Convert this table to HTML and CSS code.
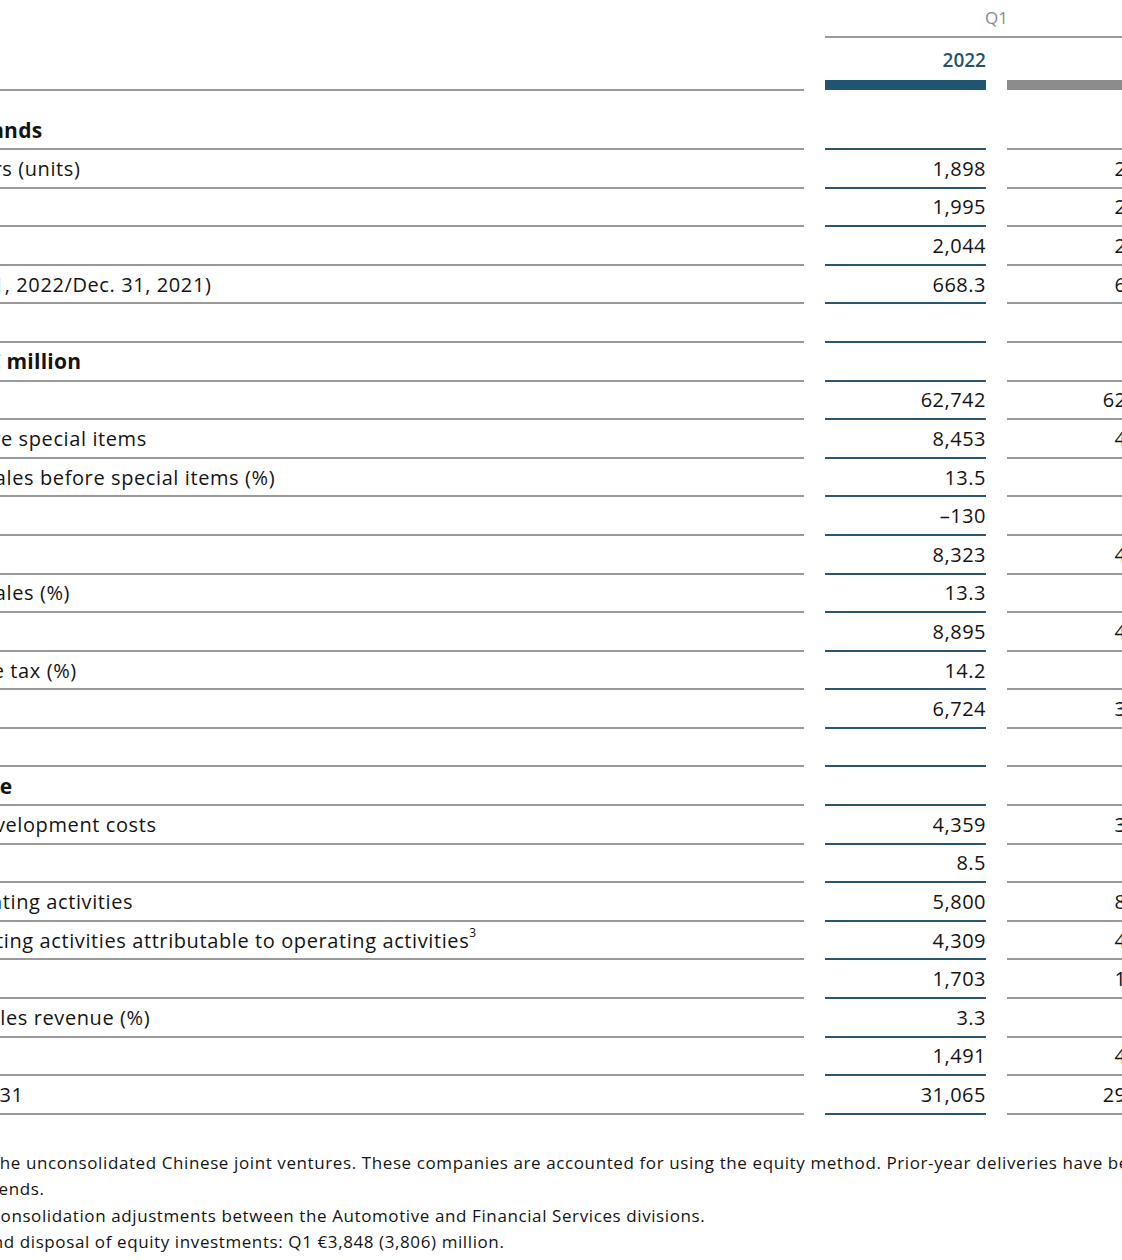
FILE: index.html
```html
<!DOCTYPE html>
<html lang="en">
<head>
<meta charset="utf-8">
<title>Key figures</title>
<link rel="stylesheet" href="styles.css">
</head>
<body>
<div class="page">
  <div class="head head-period">
    <div class="cell-label"></div>
    <div class="period">Q1</div>
  </div>
  <div class="head head-years">
    <div class="cell-label"></div>
    <div class="year cur">2022</div>
    <div class="year prev">2021</div>
  </div>

  <div class="rows">
    <div class="row section"><div class="lbl">Volume data¹ thousands</div><div class="val cur"></div><div class="val prev"></div></div>
    <div class="row"><div class="lbl">Deliveries to customers (units)</div><div class="val cur">1,898</div><div class="val prev">2,462</div></div>
    <div class="row"><div class="lbl">Vehicle sales</div><div class="val cur">1,995</div><div class="val prev">2,528</div></div>
    <div class="row"><div class="lbl">Production</div><div class="val cur">2,044</div><div class="val prev">2,492</div></div>
    <div class="row"><div class="lbl">Employees (on Mar. 31, 2022/Dec. 31, 2021)</div><div class="val cur">668.3</div><div class="val prev">672.8</div></div>
    <div class="row"><div class="lbl"></div><div class="val cur"></div><div class="val prev"></div></div>

    <div class="row section"><div class="lbl">Financial results in € million</div><div class="val cur"></div><div class="val prev"></div></div>
    <div class="row"><div class="lbl">Sales revenue</div><div class="val cur">62,742</div><div class="val prev">62,377</div></div>
    <div class="row"><div class="lbl">Operating result before special items</div><div class="val cur">8,453</div><div class="val prev">4,807</div></div>
    <div class="row"><div class="lbl">Operating return on sales before special items (%)</div><div class="val cur">13.5</div><div class="val prev">7.7</div></div>
    <div class="row"><div class="lbl">Special items</div><div class="val cur">–130</div><div class="val prev">–</div></div>
    <div class="row"><div class="lbl">Operating result</div><div class="val cur">8,323</div><div class="val prev">4,807</div></div>
    <div class="row"><div class="lbl">Operating return on sales (%)</div><div class="val cur">13.3</div><div class="val prev">7.7</div></div>
    <div class="row"><div class="lbl">Earnings before tax</div><div class="val cur">8,895</div><div class="val prev">4,956</div></div>
    <div class="row"><div class="lbl">Return on sales before tax (%)</div><div class="val cur">14.2</div><div class="val prev">7.9</div></div>
    <div class="row"><div class="lbl">Earnings after tax</div><div class="val cur">6,724</div><div class="val prev">3,378</div></div>
    <div class="row"><div class="lbl"></div><div class="val cur"></div><div class="val prev"></div></div>

    <div class="row section"><div class="lbl">Division²: Automotive</div><div class="val cur"></div><div class="val prev"></div></div>
    <div class="row"><div class="lbl">Total research and development costs</div><div class="val cur">4,359</div><div class="val prev">3,724</div></div>
    <div class="row"><div class="lbl">R&amp;D ratio (%)</div><div class="val cur">8.5</div><div class="val prev">7.1</div></div>
    <div class="row"><div class="lbl">Cash flows from operating activities</div><div class="val cur">5,800</div><div class="val prev">8,375</div></div>
    <div class="row"><div class="lbl">Cash flows from investing activities attributable to operating activities<sup>3</sup></div><div class="val cur">4,309</div><div class="val prev">4,058</div></div>
    <div class="row"><div class="lbl">of which: capex</div><div class="val cur">1,703</div><div class="val prev">1,883</div></div>
    <div class="row"><div class="lbl">Capex as a share of sales revenue (%)</div><div class="val cur">3.3</div><div class="val prev">3.6</div></div>
    <div class="row"><div class="lbl">Net cash flow</div><div class="val cur">1,491</div><div class="val prev">4,317</div></div>
    <div class="row"><div class="lbl">Net liquidity at March 31</div><div class="val cur">31,065</div><div class="val prev">29,584</div></div>
  </div>

  <div class="notes">
    <p class="note"><span class="num">1</span>Volume data including the unconsolidated Chinese joint ventures. These companies are accounted for using the equity method. Prior-year deliveries have been updated to<br>reflect new statistical trends.</p>
    <p class="note"><span class="num">2</span>Including allocation of consolidation adjustments between the Automotive and Financial Services divisions.</p>
    <p class="note"><span class="num">3</span>Excluding acquisition and disposal of equity investments: Q1 €3,848 (3,806) million.</p>
  </div>
</div>
</body>
</html>
```

FILE: styles.css
```css
html, body {
  margin: 0;
  padding: 0;
  background: #ffffff;
  overflow: hidden;
}

body {
  font-family: "Open Sans", "Noto Sans", "Liberation Sans", sans-serif;
  color: #141414;
  width: 1122px;
  height: 1260px;
}

.page {
  margin-left: -220px;
  width: 1700px;
}

.head {
  display: grid;
  grid-template-columns: 1024px 161px 161px;
  column-gap: 21px;
}

.head-period {
  height: 38px;
}

.period {
  grid-column: 2 / span 2;
  border-bottom: 2px solid #9a9a9a;
  text-align: center;
  font-size: 17px;
  line-height: 36px;
  color: #8a8a8a;
}

.head-years {
  align-items: start;
}

.head-years .cell-label {
  height: 53px;
  box-sizing: border-box;
  border-bottom: 2px solid #9a9a9a;
}

.year {
  box-sizing: border-box;
  height: 52px;
  padding-top: 10px;
  line-height: 24px;
  text-align: right;
  font-size: 19px;
  font-weight: 600;
}

.year.cur {
  color: #1f5572;
  border-bottom: 10px solid #1f5572;
}

.year.prev {
  color: #8a8a8a;
  border-bottom: 10px solid #8c8c8c;
}

.rows {
  margin-top: 20.4px;
}

.row {
  display: grid;
  grid-template-columns: 1024px 161px 161px;
  column-gap: 21px;
  height: 38.6px;
}

.lbl, .val {
  box-sizing: border-box;
  height: 100%;
  display: flex;
  align-items: center;
  font-size: 20px;
  white-space: nowrap;
  border-bottom: 2px solid #999999;
}

.lbl {
  letter-spacing: 0.6px;
}

.val {
  justify-content: flex-end;
  letter-spacing: 0.5px;
}

.val.cur {
  border-bottom-color: #2a5670;
}

.section .lbl {
  font-weight: 700;
  font-size: 21px;
  letter-spacing: 0.25px;
}

sup {
  font-size: 12px;
  line-height: 0;
  position: relative;
  top: -7px;
  vertical-align: baseline;
}

.notes {
  margin-top: 35px;
  margin-left: 19px;
}

.note {
  position: relative;
  margin: 0;
  font-size: 17px;
  line-height: 26.4px;
  white-space: nowrap;
  letter-spacing: 0.6px;
}

.num {
  position: absolute;
  left: -14px;
  top: -4px;
  font-size: 11px;
}
```
